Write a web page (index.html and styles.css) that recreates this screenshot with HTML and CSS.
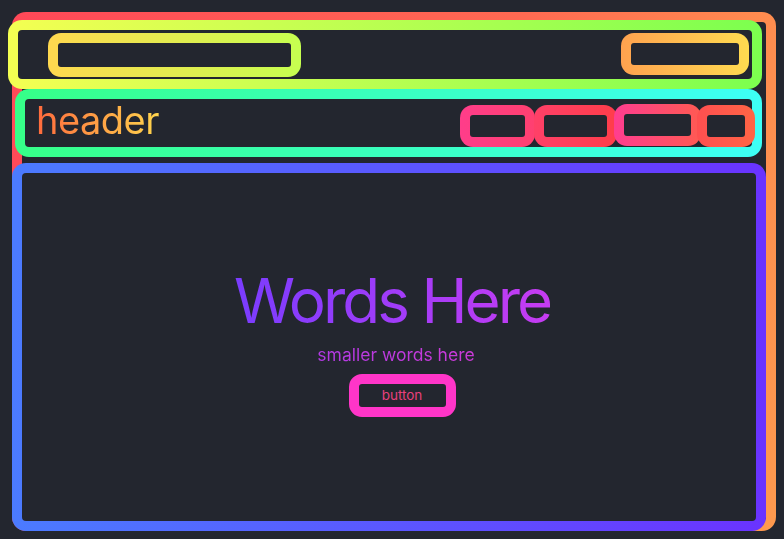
FILE: index.html
```html
<!DOCTYPE html>
<html lang="en">
<head>
<meta charset="utf-8">
<title>Wireframe</title>
<link rel="stylesheet" href="styles.css">
</head>
<body>
  <div class="frame">
    <div class="topbar">
      <div class="pill pill-search"></div>
      <div class="pill pill-account"></div>
    </div>
    <div class="header">
      <h1 class="header-title">header</h1>
      <nav class="nav">
        <div class="pill nav-a"></div>
        <div class="pill nav-b"></div>
        <div class="pill nav-c"></div>
        <div class="pill nav-d"></div>
      </nav>
    </div>
    <main class="hero">
      <h2 class="hero-title">Words Here</h2>
      <p class="hero-sub">smaller words here</p>
      <button class="hero-btn"><span>button</span></button>
    </main>
  </div>
</body>
</html>
```
FILE: styles.css
```css
:root { --bg: #23262f; }
* { box-sizing: border-box; }
html, body { margin: 0; padding: 0; }
body {
  background: var(--bg);
  font-family: Inter, "Noto Sans", sans-serif;
  width: 784px;
  height: 539px;
  overflow: hidden;
}

.frame {
  margin: 12px 0 0 12px;
  width: 764px;
  height: 519px;
  border: 10px solid transparent;
  border-radius: 14px;
  background:
    linear-gradient(var(--bg), var(--bg)) padding-box,
    linear-gradient(100deg, #ff4858 0%, #ff6a52 60%, #ff9a4e 100%) border-box;
  display: flex;
  flex-direction: column;
}

.topbar {
  margin: -2px 0 0 -14px;
  width: 754px;
  height: 69px;
  flex: none;
  border: 10px solid transparent;
  border-radius: 14px;
  background:
    linear-gradient(var(--bg), var(--bg)) padding-box,
    linear-gradient(90deg, #f4ff52, #7cff4f) border-box;
  display: flex;
  align-items: flex-start;
  justify-content: space-between;
  padding: 3px 3px 0 30px;
}

.pill {
  border: 10px solid transparent;
  border-radius: 13px;
  flex: none;
}
.pill-search {
  width: 253px;
  height: 44px;
  background:
    linear-gradient(var(--bg), var(--bg)) padding-box,
    linear-gradient(90deg, #ffd84f, #c6ff50) border-box;
}
.pill-account {
  width: 128px;
  height: 42px;
  background:
    linear-gradient(var(--bg), var(--bg)) padding-box,
    linear-gradient(90deg, #ffa24f, #ffdb50) border-box;
}

.header {
  margin: 0 0 0 -7px;
  width: 747px;
  height: 68px;
  flex: none;
  border: 10px solid transparent;
  border-radius: 14px;
  background:
    linear-gradient(var(--bg), var(--bg)) padding-box,
    linear-gradient(90deg, #36ff88, #3dfff6) border-box;
  display: flex;
  align-items: center;
  justify-content: space-between;
  padding: 0 0 0 11px;
}
.header-title {
  margin: -6px 0 0 0;
  font-size: 38px;
  font-weight: 400;
  line-height: 1;
  letter-spacing: -0.5px;
  background: linear-gradient(90deg, #ff6a3d, #ffd54d);
  -webkit-background-clip: text;
  background-clip: text;
  color: transparent;
}
.nav {
  display: flex;
  align-items: center;
  margin: 6px -3px 0 0;
}
.nav .pill { height: 42px; }
.nav-a {
  width: 75px;
  background:
    linear-gradient(var(--bg), var(--bg)) padding-box,
    linear-gradient(90deg, #ff3d8a, #ff4070) border-box;
}
.nav-b {
  width: 83px;
  margin-left: -1px;
  background:
    linear-gradient(var(--bg), var(--bg)) padding-box,
    linear-gradient(90deg, #ff4068, #ff3d4a) border-box;
}
.nav-c {
  width: 87px;
  margin-left: -3px;
  margin-top: -3px;
  background:
    linear-gradient(var(--bg), var(--bg)) padding-box,
    linear-gradient(90deg, #ff3d90, #ff5a52) border-box;
}
.nav-d {
  width: 58px;
  margin-left: -4px;
  background:
    linear-gradient(var(--bg), var(--bg)) padding-box,
    linear-gradient(90deg, #ff4f50, #ff6545) border-box;
}

.hero {
  margin: 6px 0 0 -10px;
  width: 754px;
  height: 368px;
  flex: none;
  border: 10px solid transparent;
  border-radius: 14px;
  background:
    linear-gradient(var(--bg), var(--bg)) padding-box,
    linear-gradient(90deg, #4b7bff, #6a33ff) border-box;
  display: flex;
  flex-direction: column;
  align-items: center;
  justify-content: center;
  padding-bottom: 8px;
}
.hero-title {
  margin: 0 0 0 6px;
  font-size: 62px;
  font-weight: 400;
  line-height: 1;
  letter-spacing: -3px;
  background: linear-gradient(90deg, #7a3cff, #c63cf2);
  -webkit-background-clip: text;
  background-clip: text;
  color: transparent;
}
.hero-sub {
  margin: 12px 0 0 14px;
  font-size: 17.5px;
  line-height: 1.2;
  background: linear-gradient(90deg, #b23ae4, #cc3ad8);
  -webkit-background-clip: text;
  background-clip: text;
  color: transparent;
}
.hero-btn {
  margin: 9px 0 0 26px;
  width: 107px;
  height: 43px;
  border: 10px solid #ff35c8;
  border-radius: 13px;
  background: var(--bg);
  font-family: Inter, "Noto Sans", sans-serif;
  font-size: 13.5px;
  color: #e8407c;
  padding: 0;
  cursor: pointer;
}
```
